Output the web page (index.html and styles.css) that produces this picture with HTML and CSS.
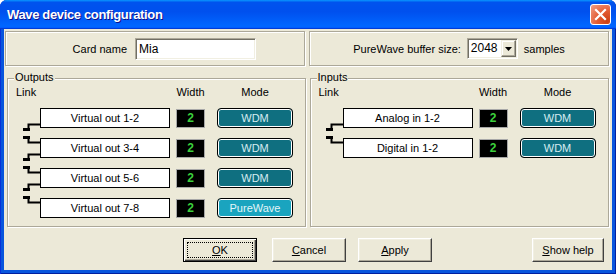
FILE: index.html
```html
<!DOCTYPE html>
<html>
<head>
    <meta charset="utf-8">
    <link rel="stylesheet" href="styles.css">
</head>
<body>
<div class="window">
    <div class="titlebar">
        <span class="title">Wave device configuration</span>
        <span class="close">
            <svg width="13" height="13" viewBox="0 0 13 13"><path d="M2 2L11 11M11 2L2 11" stroke="#fff" stroke-width="2.2" stroke-linecap="square"/></svg>
        </span>
    </div>
    <div class="client">
        <div class="top">
            <div class="panel card">
                <span class="card-label">Card name</span>
                <span class="edit">Mia</span>
            </div>
            <div class="panel buffer">
                <span>PureWave buffer size:</span>
                <span class="combo">
                    <span class="combo-value">2048</span>
                    <span class="combo-btn"><svg width="7" height="4" viewBox="0 0 7 4"><path d="M0 0H7L3.5 4Z" fill="#000"/></svg></span>
                </span>
                <span>samples</span>
            </div>
        </div>

        <div class="groups">
            <div class="group outputs">
                <span class="group-title">Outputs</span>
                <div class="row head">
                    <span class="link">Link</span>
                    <span class="name"></span>
                    <span class="width">Width</span>
                    <span class="mode">Mode</span>
                </div>
                <div class="row">
                    <svg class="link" width="32" height="20" viewBox="0 0 32 20">
                        <path d="M32 16.5H20.5V21"/><rect x="15" y="20" width="7" height="3"/>
                    </svg>
                    <span class="name">Virtual out 1-2</span>
                    <span class="width">2</span>
                    <span class="mode">WDM</span>
                </div>
                <div class="row">
                    <svg class="link" width="32" height="20" viewBox="0 0 32 20">
                        <rect x="15" y="-2" width="7" height="3"/><path d="M20.5 0V4.5H32"/>
                        <path d="M32 16.5H20.5V21"/><rect x="15" y="20" width="7" height="3"/>
                    </svg>
                    <span class="name">Virtual out 3-4</span>
                    <span class="width">2</span>
                    <span class="mode">WDM</span>
                </div>
                <div class="row">
                    <svg class="link" width="32" height="20" viewBox="0 0 32 20">
                        <rect x="15" y="-2" width="7" height="3"/><path d="M20.5 0V4.5H32"/>
                        <path d="M32 16.5H20.5V21"/><rect x="15" y="20" width="7" height="3"/>
                    </svg>
                    <span class="name">Virtual out 5-6</span>
                    <span class="width">2</span>
                    <span class="mode">WDM</span>
                </div>
                <div class="row">
                    <svg class="link" width="32" height="20" viewBox="0 0 32 20">
                        <rect x="15" y="-2" width="7" height="3"/><path d="M20.5 0V4.5H32"/>
                    </svg>
                    <span class="name">Virtual out 7-8</span>
                    <span class="width">2</span>
                    <span class="mode pure">PureWave</span>
                </div>
            </div>

            <div class="group inputs">
                <span class="group-title">Inputs</span>
                <div class="row head">
                    <span class="link">Link</span>
                    <span class="name"></span>
                    <span class="width">Width</span>
                    <span class="mode">Mode</span>
                </div>
                <div class="row">
                    <svg class="link" width="32" height="20" viewBox="0 0 32 20">
                        <path d="M32 16.5H20.5V21"/><rect x="15" y="20" width="7" height="3"/>
                    </svg>
                    <span class="name">Analog in 1-2</span>
                    <span class="width">2</span>
                    <span class="mode">WDM</span>
                </div>
                <div class="row">
                    <svg class="link" width="32" height="20" viewBox="0 0 32 20">
                        <rect x="15" y="-2" width="7" height="3"/><path d="M20.5 0V4.5H32"/>
                    </svg>
                    <span class="name">Digital in 1-2</span>
                    <span class="width">2</span>
                    <span class="mode">WDM</span>
                </div>
            </div>
        </div>

        <div class="buttons">
            <button class="btn default"><span class="focus"><u>O</u>K</span></button>
            <button class="btn cancel"><span><u>C</u>ancel</span></button>
            <button class="btn apply"><span><u>A</u>pply</span></button>
            <button class="btn help"><span><u>S</u>how help</span></button>
        </div>
    </div>
</div>
</body>
</html>
```

FILE: styles.css
```css
body {
    margin: 0;
    background: #fff;
    font-family: "Liberation Sans", Arial, sans-serif;
    font-size: 11px;
    color: #000;
}

.window {
    width: 616px;
    height: 274px;
    display: flex;
    flex-direction: column;
    background: #0855dd;
    border-radius: 7px 7px 0 0;
    box-shadow: inset 1px 0 #0831d9, inset -1px 0 #001ea0, inset 0 -1px #001ea0;
    overflow: hidden;
}

.titlebar {
    flex: none;
    height: 29px;
    display: flex;
    align-items: center;
    padding: 0 5px 0 7px;
    background: linear-gradient(180deg, #0997ff, #0053ee 8%, #0050ee 40%, #0066ff 88%, #0066ff 93%, #005bff 95%, #003dd7 96%, #003dd7);
}

.title {
    color: #fff;
    font-weight: bold;
    font-size: 13px;
    letter-spacing: -0.35px;
    text-shadow: 1px 1px #0f1089;
}

.close {
    margin-left: auto;
    width: 21px;
    height: 21px;
    box-sizing: border-box;
    border: 1px solid #fff;
    border-radius: 3px;
    background: radial-gradient(circle at 85% 85%, #cc4014 0%, #e35c33 45%, #f0a088 100%);
    display: flex;
    align-items: center;
    justify-content: center;
}

.client {
    flex: 1;
    margin: 0 4px 4px;
    background: #ece9d8;
    padding: 2px 3px 0 1px;
    display: flex;
    flex-direction: column;
}

/* etched frames */
.panel, .group {
    box-sizing: border-box;
    border: 1px solid #aca899;
    box-shadow: inset 1px 1px #fff, 1px 1px #fff;
}

.top {
    display: flex;
    gap: 4px;
    height: 35px;
}

.panel {
    width: 300px;
    display: flex;
    align-items: center;
}

.card-label {
    width: 121px;
    text-align: right;
    margin-right: 8px;
}

.edit, .combo {
    box-sizing: border-box;
    background: #fff;
    border: 1px solid;
    border-color: #aca899 #fff #fff #aca899;
    box-shadow: inset 1px 1px #716f64, inset -1px -1px #f1efe2;
    font-size: 12px;
}

.edit {
    width: 121px;
    height: 22px;
    padding: 0 3px;
    line-height: 20px;
}

.buffer {
    justify-content: center;
    gap: 6px;
}

.combo {
    display: flex;
    width: 51px;
    height: 21px;
    padding: 1px;
}

.combo-value {
    flex: 1;
    padding-left: 2px;
    line-height: 17px;
}

.combo-btn {
    width: 15px;
    height: 17px;
    box-sizing: border-box;
    background: #ece9d8;
    border: 1px solid;
    border-color: #f1efe2 #716f64 #716f64 #f1efe2;
    box-shadow: inset -1px -1px #aca899, inset 1px 1px #fff;
    display: flex;
    align-items: center;
    justify-content: center;
}

.groups {
    display: flex;
    gap: 4px;
    margin-top: 12px;
    padding-left: 2px;
}

.group {
    position: relative;
    height: 149px;
    padding-top: 8px;
}

.outputs { width: 299px; }
.inputs { width: 300px; }

.group-title {
    position: absolute;
    left: 6px;
    top: -8px;
    padding: 0 1px;
    line-height: 12px;
    background: #ece9d8;
}

.row {
    display: flex;
    align-items: center;
    height: 20px;
    margin-top: 10px;
}

.row.head {
    height: 11px;
    margin-top: 0;
    line-height: 11px;
}

.link {
    flex: none;
    width: 32px;
    overflow: visible;
}

.link path {
    fill: none;
    stroke: #000;
    stroke-width: 2;
}

.head .link { padding-left: 8px; box-sizing: border-box; }

.name {
    flex: none;
    width: 130px;
    text-align: center;
}

.width {
    flex: none;
    width: 29px;
    margin-left: 6px;
    text-align: center;
}

.mode {
    flex: none;
    width: 76px;
    margin-left: 12px;
    text-align: center;
}

.row:not(.head) .name {
    height: 20px;
    box-sizing: border-box;
    border: 1px solid #000;
    background: #fff;
    line-height: 18px;
}

.row:not(.head) .width {
    height: 19px;
    box-sizing: border-box;
    border: 1px solid #a8a8a8;
    background: #000;
    color: #3ccf3c;
    font-weight: bold;
    font-size: 12px;
    line-height: 17px;
}

.row:not(.head) .mode {
    height: 20px;
    box-sizing: border-box;
    border: 1px solid #000;
    border-radius: 4px;
    box-shadow: inset 0 0 0 1px #fff;
    background: #0f6f80;
    color: #d6ecf0;
    line-height: 18px;
}

.row:not(.head) .mode.pure {
    background: #1aa4bf;
    color: #e4f6f9;
}

.buttons {
    display: flex;
    margin-top: 11px;
    padding-left: 178px;
    padding-right: 5px;
}

.btn {
    width: 74px;
    height: 24px;
    box-sizing: border-box;
    margin: 0;
    padding: 0;
    font: inherit;
    color: #000;
    background: #ece9d8;
    border: 1px solid;
    border-color: #fff #404040 #404040 #fff;
    box-shadow: inset -1px -1px #aca899, inset 1px 1px #f1efe2;
    display: flex;
    align-items: center;
    justify-content: center;
}

.btn.default {
    border-color: #000;
    box-shadow: inset 1px 1px #fff, inset -1px -1px #404040, inset -2px -2px #aca899;
    padding: 3px;
}

.focus {
    flex: 1;
    align-self: stretch;
    display: flex;
    align-items: center;
    justify-content: center;
    border: 1px dotted #000;
}

.cancel { margin-left: 15px; }
.apply { margin-left: 12px; }
.help { margin-left: auto; width: 72px; }
```
